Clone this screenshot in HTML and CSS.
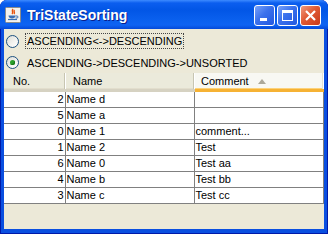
FILE: index.html
```html
<!DOCTYPE html>
<html lang="en">
<head>
	<meta charset="UTF-8">
	<title>TriStateSorting</title>
	<link rel="stylesheet" href="styles.css">
</head>
<body>
<div class="window">
	<div class="titlebar">
		<svg class="app-icon" width="16" height="16" viewBox="0 0 16 16">
			<rect x="0.5" y="0.5" width="15" height="15" rx="1" fill="#f4f2ee" stroke="#8c8c8c"/>
			<path d="M8 2c-2 2 1 3-1 5M9.5 3c-1.5 1.5 1 2-0.5 4" stroke="#e8520c" stroke-width="1.4" fill="none"/>
			<path d="M3.5 8.5h7c0 2-1.5 3-3.5 3s-3.5-1-3.5-3z" fill="#3b6fb5"/>
			<path d="M10.5 9h1.5a1 1 0 0 1 0 2h-1.5" stroke="#3b6fb5" fill="none"/>
			<path d="M3 12.5h9" stroke="#3b6fb5" stroke-width="1.2"/>
		</svg>
		<span class="title">TriStateSorting</span>
		<div class="caption-btns">
			<span class="cap-btn"><svg width="19" height="19" viewBox="0 0 19 19"><rect x="5" y="12" width="7" height="3" fill="#fff"/></svg></span>
			<span class="cap-btn"><svg width="19" height="19" viewBox="0 0 19 19"><rect x="4.5" y="4.5" width="10" height="10" fill="none" stroke="#fff"/><rect x="4" y="4" width="11" height="3" fill="#fff"/></svg></span>
			<span class="cap-btn close"><svg width="19" height="19" viewBox="0 0 19 19"><path d="M5 5l9 9M14 5l-9 9" stroke="#fff" stroke-width="2.2"/></svg></span>
		</div>
	</div>
	<div class="client">
		<div class="radio">
			<span class="radio-dot"></span>
			<span class="radio-text focus">ASCENDING&lt;-&gt;DESCENDING</span>
		</div>
		<div class="radio">
			<span class="radio-dot checked"></span>
			<span class="radio-text">ASCENDING-&gt;DESCENDING-&gt;UNSORTED</span>
		</div>
		<table class="grid">
			<colgroup>
				<col class="c-no">
				<col class="c-name">
				<col class="c-comment">
			</colgroup>
			<thead>
				<tr>
					<th><span class="hcell">No.</span></th>
					<th><span class="hcell">Name</span></th>
					<th class="sorted"><span class="hcell">Comment <i class="arrow"></i></span></th>
				</tr>
			</thead>
			<tbody>
				<tr><td class="num">2</td><td>Name d</td><td></td></tr>
				<tr><td class="num">5</td><td>Name a</td><td></td></tr>
				<tr><td class="num">0</td><td>Name 1</td><td>comment...</td></tr>
				<tr><td class="num">1</td><td>Name 2</td><td>Test</td></tr>
				<tr><td class="num">6</td><td>Name 0</td><td>Test aa</td></tr>
				<tr><td class="num">4</td><td>Name b</td><td>Test bb</td></tr>
				<tr><td class="num">3</td><td>Name c</td><td>Test cc</td></tr>
			</tbody>
		</table>
	</div>
</div>
</body>
</html>
```

FILE: styles.css
```css
html, body {
	margin: 0;
	padding: 0;
	background: #fff;
}
.window {
	width: 328px;
	height: 234px;
	display: flex;
	flex-direction: column;
	background: #0a4fe0;
	border-radius: 7px 7px 0 0;
	box-shadow: inset 1px 0 #0019a8, inset -1px 0 #0019a8, inset 0 -1px #0019a8;
	font-family: "Liberation Sans", Arial, sans-serif;
}
.titlebar {
	height: 29px;
	display: flex;
	align-items: center;
	padding: 0 7px 0 5px;
	border-radius: 7px 7px 0 0;
	background: linear-gradient(to bottom, #3d8bff 0, #0b5eef 3px, #0256e6 10px, #0a60ee 20px, #0e63f2 25px, #0449d8 29px);
}
.app-icon {
	margin-top: 1px;
	flex: none;
}
.title {
	margin-left: 6px;
	color: #fff;
	font-weight: bold;
	font-size: 14px;
	text-shadow: 1px 1px #0a1e8c;
	flex: 1;
}
.caption-btns {
	display: flex;
	gap: 2px;
	margin-top: 2px;
}
.cap-btn {
	width: 19px;
	height: 19px;
	border: 1px solid #fff;
	border-radius: 3px;
	background: linear-gradient(135deg, #78a2fa 0%, #3b71ec 45%, #2258e0 100%);
	display: block;
}
.cap-btn svg {
	display: block;
}
.cap-btn.close {
	background: linear-gradient(135deg, #f09a7e 0%, #e05a34 45%, #c8391a 100%);
}
.client {
	flex: 1;
	margin: 0 4px 5px 4px;
	background: #ece9d8;
	font-size: 11px;
	color: #000;
}
.radio {
	height: 21px;
	display: flex;
	align-items: center;
	padding-left: 2px;
}
.radio:first-child {
	margin-top: 1px;
	height: 22px;
}
.radio-dot {
	width: 11px;
	height: 11px;
	border: 1px solid #1c5180;
	border-radius: 50%;
	background: linear-gradient(135deg, #dcdcd6 0%, #f4f4f1 60%, #fff 100%);
	position: relative;
	flex: none;
}
.radio-dot.checked::after {
	content: "";
	position: absolute;
	left: 3px;
	top: 3px;
	width: 5px;
	height: 5px;
	border-radius: 50%;
	background: #2aa02a;
	box-shadow: inset -1px -1px #1a7a1a;
}
.radio-text {
	margin-left: 6px;
	padding: 1px 1px;
	border: 1px solid transparent;
}
.radio-text.focus {
	border: 1px dotted #444;
}
.grid {
	border-collapse: collapse;
	table-layout: fixed;
	width: 319px;
	margin-top: 0;
	background: #fff;
}
.c-no { width: 61px; }
.c-name { width: 129px; }
.c-comment { width: 129px; }
.grid th {
	height: 16px;
	padding: 0;
	font-weight: normal;
	text-align: left;
	background: #ebeadb;
	border-bottom: 3px solid #d6d2c2;
	box-shadow: inset 0 -1px #e2decd;
}
.grid th.sorted {
	background: #f8f8f3;
	border-bottom: 3px solid #f6b234;
	box-shadow: inset 0 -1px #fcd27a;
}
.hcell {
	display: block;
	height: 16px;
	line-height: 16px;
	padding-left: 9px;
	border-right: 1px solid #c7c5b2;
	box-shadow: 1px 0 #fff;
	position: relative;
}
.grid th:nth-child(2) .hcell {
	padding-left: 8px;
}
.grid th.sorted .hcell {
	border-right: 1px solid #e3e1d4;
	padding-left: 7px;
}
.arrow {
	position: absolute;
	left: 64px;
	top: 6px;
	width: 0;
	height: 0;
	border-left: 4px solid transparent;
	border-right: 4px solid transparent;
	border-bottom: 5px solid #aca899;
}
.grid td {
	height: 15px;
	padding: 0 1px;
	line-height: 15px;
	border-right: 1px solid #808080;
	border-bottom: 1px solid #808080;
	white-space: nowrap;
	overflow: hidden;
}
.grid td.num {
	text-align: right;
}
```
